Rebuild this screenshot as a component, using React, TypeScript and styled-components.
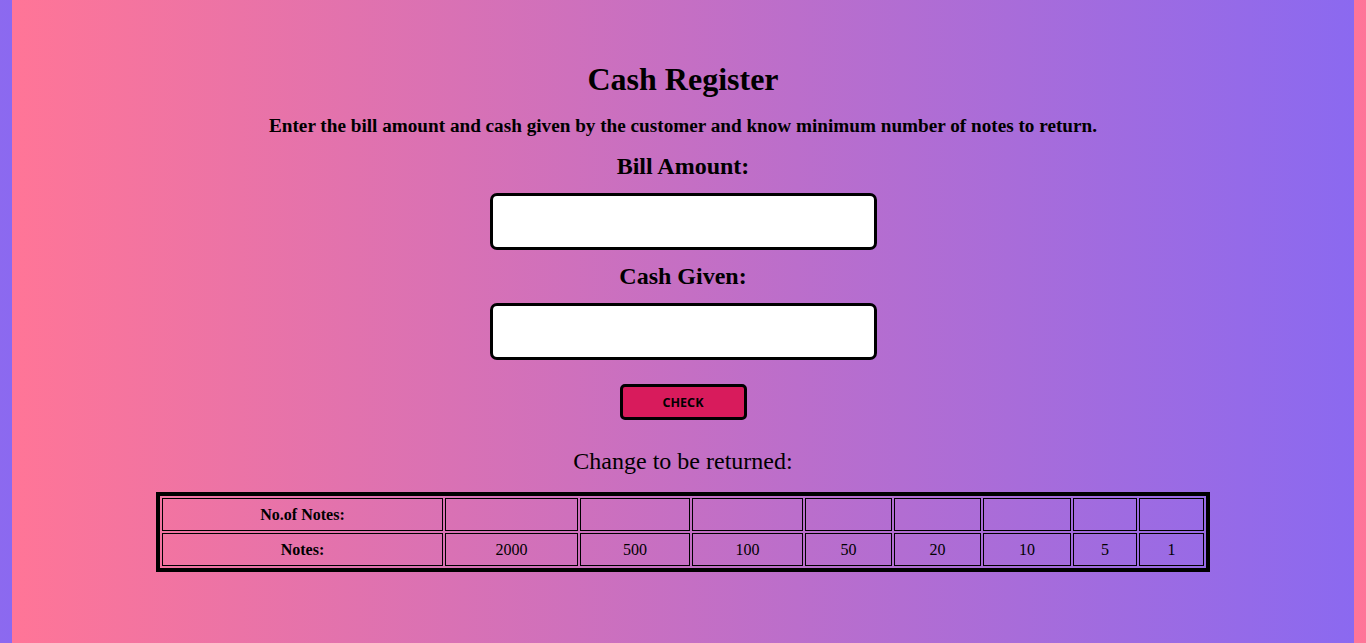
import React from "react";
import styled, { createGlobalStyle } from "styled-components";

const Global = createGlobalStyle`
  html {
    background-color: #8b69f0;
    background-image: linear-gradient(to right, #ff7597, #8b69f0);
    background-size: 1342px 100%;
    background-position: 12px 0;
    background-repeat: repeat-x;
    min-height: 100%;
  }
  body {
    margin: 0;
    font-family: "Liberation Serif", "Times New Roman", serif;
    color: #000;
  }
`;

const Page = styled.main`
  display: flex;
  flex-direction: column;
  align-items: center;
  padding: 61px 12px 40px;
`;

const Title = styled.h1`
  font-size: 32px;
  font-weight: bold;
  margin: 0 0 17px;
`;

const Lead = styled.p`
  font-size: 19.2px;
  font-weight: bold;
  margin: 0 0 16px;
`;

const Label = styled.label`
  font-size: 24px;
  font-weight: bold;
  margin: 0 0 13px;
`;

const Field = styled.input`
  width: 387px;
  height: 57px;
  box-sizing: border-box;
  border: 3px solid #000;
  border-radius: 7px;
  background: #fff;
  margin-bottom: 13px;
  font-size: 20px;
  padding: 0 10px;
`;

const Button = styled.button`
  width: 127px;
  height: 36px;
  box-sizing: border-box;
  margin-top: 11px;
  border: 3px solid #000;
  border-radius: 5px;
  background: #d81b5c;
  font-family: "Noto Sans", Arial, sans-serif;
  font-weight: bold;
  font-size: 12.5px;
  color: #000;
  padding: 0;
`;

const Sub = styled.h2`
  font-size: 24px;
  font-weight: normal;
  margin: 28px 0 17px;
`;

const Table = styled.table`
  border: 4px solid #000;
  border-spacing: 2px;
  width: 1054px;
  font-size: 16px;
`;

const Head = styled.th`
  border: 1px solid #000;
  padding: 6.5px 7px;
  font-weight: bold;
`;

const Cell = styled.td`
  border: 1px solid #000;
  padding: 6.5px 7px;
  text-align: center;
`;

const notes = [2000, 500, 100, 50, 20, 10, 5, 1];
const widths = [281, 133, 110, 111, 87, 87, 88, 64, 65];

export default function App() {
  return (
    <>
      <Global />
      <Page>
        <Title>Cash Register</Title>
        <Lead>
          Enter the bill amount and cash given by the customer and know minimum
          number of notes to return.
        </Lead>
        <Label htmlFor="bill">Bill Amount:</Label>
        <Field id="bill" type="number" />
        <Label htmlFor="cash">Cash Given:</Label>
        <Field id="cash" type="number" />
        <Button>CHECK</Button>
        <Sub>Change to be returned:</Sub>
        <Table>
          <colgroup>
            {widths.map((w, i) => (
              <col key={i} style={{ width: w }} />
            ))}
          </colgroup>
          <tbody>
            <tr>
              <Head>No.of Notes:</Head>
              {notes.map((n) => (
                <Cell key={n}></Cell>
              ))}
            </tr>
            <tr>
              <Head>Notes:</Head>
              {notes.map((n) => (
                <Cell key={n}>{n}</Cell>
              ))}
            </tr>
          </tbody>
        </Table>
      </Page>
    </>
  );
}
